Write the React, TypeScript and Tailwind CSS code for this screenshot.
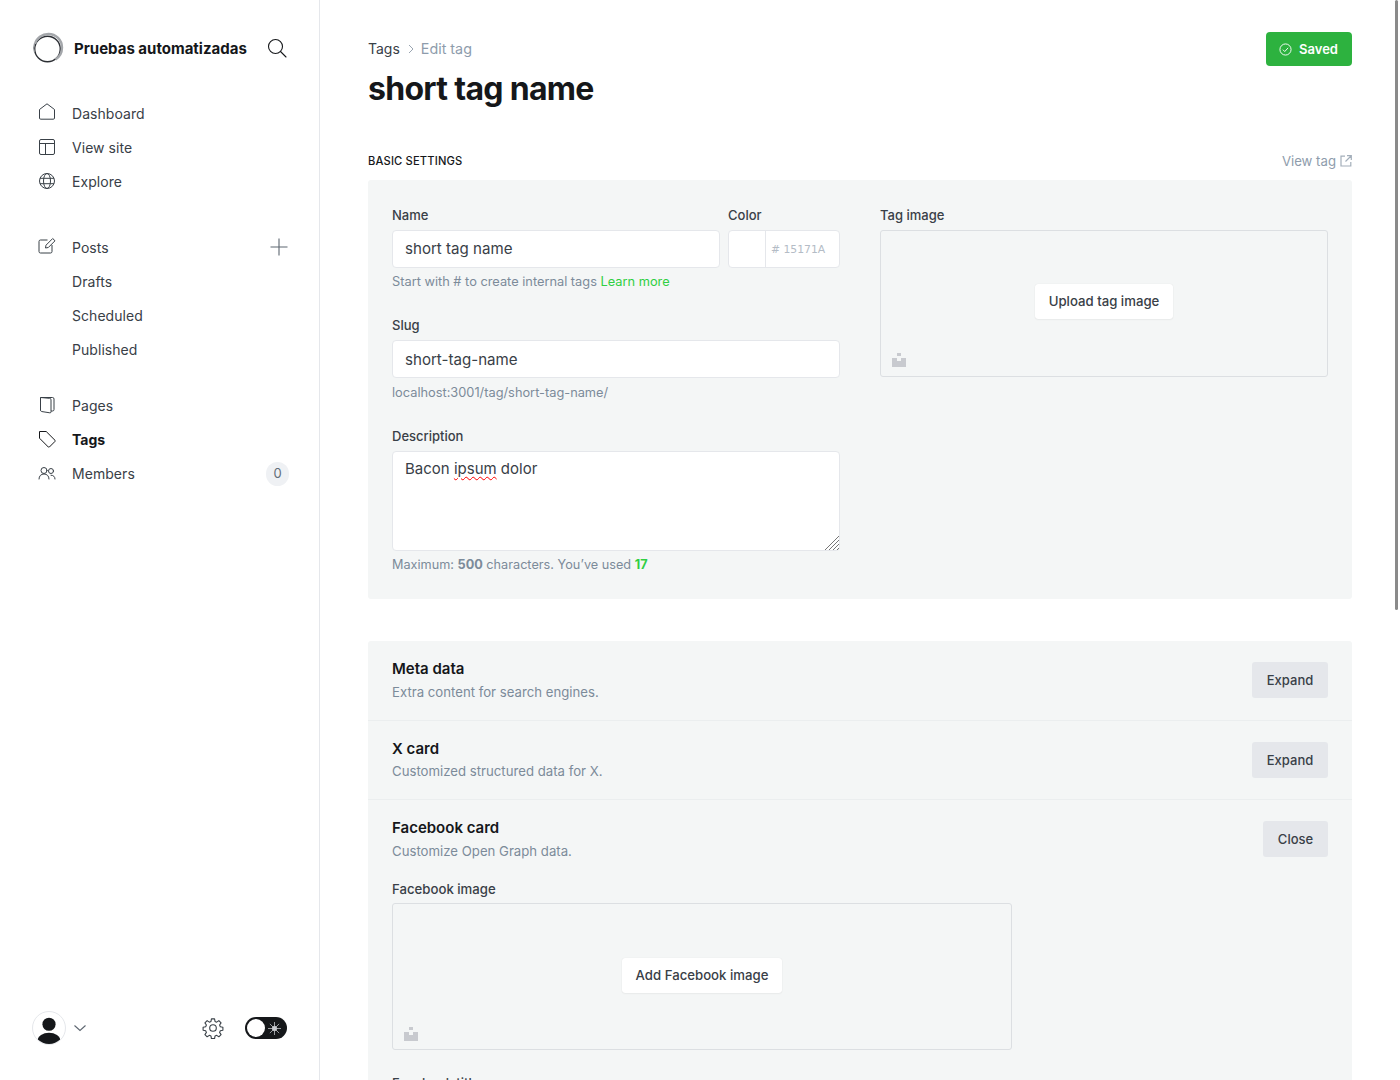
import React from "react";

const Home = () => (
  <svg width="18" height="18" viewBox="0 0 18 18" fill="none" stroke="#394047" strokeWidth="1" strokeLinejoin="round" className="-translate-y-[2px]">
    <path d="M1.500 6.500 9 .8l7.500 5.700v8.500a1.200 1.200 0 0 1-1.200 1.200H2.700a1.200 1.200 0 0 1-1.200-1.200z" />
  </svg>
);
const Layout = () => (
  <svg width="18" height="18" viewBox="0 0 18 18" fill="none" stroke="#394047" strokeWidth="1" className="-translate-y-[1px]">
    <rect x="1.500" y="1.500" width="15" height="15" rx="1.500" />
    <path d="M1.500 5.500h15M7.500 5.500v11" />
  </svg>
);
const Globe = () => (
  <svg width="18" height="18" viewBox="0 0 18 18" fill="none" stroke="#394047" strokeWidth="1" className="-translate-y-[1px]">
    <circle cx="9" cy="9" r="7.500" />
    <ellipse cx="9" cy="9" rx="3.500" ry="7.500" />
    <path d="M2 6.300h14M2 11.700h14" />
  </svg>
);
const Edit = () => (
  <svg width="18" height="18" viewBox="0 0 18 18" fill="none" stroke="#394047" strokeWidth="1" strokeLinejoin="round" className="-translate-y-[2px]">
    <path d="M9.500 3H2.500A1.500 1.500 0 0 0 1 4.500v10A1.500 1.500 0 0 0 2.500 16h10a1.500 1.500 0 0 0 1.500-1.500V8" />
    <path d="M7.500 11 8 8.200 14.700 1.500 17 3.800 10.300 10.500z" />
  </svg>
);
const Page = () => (
  <svg width="18" height="18" viewBox="0 0 18 18" fill="none" stroke="#394047" strokeWidth="1" strokeLinejoin="round" className="-translate-y-[1px]">
    <path d="M2.500 1.500h12A1.500 1.500 0 0 1 16 3v10.500a1.500 1.500 0 0 1-1.500 1.500H13" />
    <path d="M2.500 1.500 11.500 2.300A1.500 1.500 0 0 1 13 3.800v12a1 1 0 0 1-1.200 1L3.500 15.500A1.500 1.500 0 0 1 2.500 14z" />
  </svg>
);
const Tag = () => (
  <svg width="18" height="18" viewBox="0 0 18 18" fill="none" stroke="#15171a" strokeWidth="1" strokeLinejoin="round" className="-translate-y-[1px]">
    <path d="M1.500 1.500h6.700L17 10.300a.8.800 0 0 1 0 1.100L11.400 17a.8.800 0 0 1-1.100 0L1.500 8.200z" />
  </svg>
);
const Users = () => (
  <svg width="18" height="18" viewBox="0 0 18 18" fill="none" stroke="#394047" strokeWidth="1" strokeLinecap="round" className="-translate-y-[1px]">
    <circle cx="6" cy="6.500" r="3" />
    <path d="M1 15c0-3 2-5 5-5s5 2 5 5" />
    <circle cx="13" cy="7" r="2.500" />
    <path d="M13 11.200c2.500 0 4 1.500 4 3.800" />
  </svg>
);

function NavItem({ icon, label, active, right }: { icon?: React.ReactNode; label: string; active?: boolean; right?: React.ReactNode }) {
  return (
    <div className="flex h-[34px] items-center">
      <div className="flex w-[34px] shrink-0 items-center">{icon}</div>
      <span className={active ? "-translate-y-[1px] text-[14px] font-bold text-[#15171a]" : "-translate-y-[1px] text-[14px] tracking-[0.05px] text-[#394047]"}>{label}</span>
      {right && <div className="ml-auto flex items-center">{right}</div>}
    </div>
  );
}

function Sidebar() {
  return (
    <aside className="flex h-[1080px] w-[320px] shrink-0 flex-col border-r border-[#e5e7eb] pl-[38px] pr-[30px]">
      <div className="-ml-[6px] mt-[31px] flex h-[34px] items-center">
        <svg width="32" height="32" viewBox="0 0 32 32" fill="none" className="mr-[10px] shrink-0">
          <circle cx="15.500" cy="17" r="12.800" stroke="#2b2e33" strokeWidth="1.400" />
          <path d="M3 12C4.500 6 10 2 16.500 2 24 2 30 8 30 15.500c0 5-2.500 9.500-6.500 12" stroke="#a4a7ab" strokeWidth="2.400" />
          <path d="M2.500 20c-1-3-1-6 0-8.500" stroke="#8d9095" strokeWidth="1.200" />
        </svg>
        <span className="translate-y-[1px] text-[15px] font-bold text-[#15171a]">Pruebas automatizadas</span>
        <svg width="20" height="20" viewBox="0 0 20 20" fill="none" stroke="#15171a" strokeWidth="1.100" strokeLinecap="round" className="ml-auto mr-[2px]">
          <circle cx="8.500" cy="8.500" r="7" />
          <path d="m13.500 13.500 5.500 5.500" />
        </svg>
      </div>

      <nav className="mt-[32px]">
        <NavItem icon={<Home />} label="Dashboard" />
        <NavItem icon={<Layout />} label="View site" />
        <NavItem icon={<Globe />} label="Explore" />
      </nav>

      <nav className="mt-[32px]">
        <NavItem
          icon={<Edit />}
          label="Posts"
          right={
            <svg width="18" height="18" viewBox="0 0 18 18" fill="none" stroke="#5d6670" strokeWidth="1.100" className="mr-[1px] -translate-y-[1px]">
              <path d="M9 .5v17M.5 9h17" />
            </svg>
          }
        />
        <NavItem label="Drafts" />
        <NavItem label="Scheduled" />
        <NavItem label="Published" />
      </nav>

      <nav className="mt-[22px]">
        <NavItem icon={<Page />} label="Pages" />
        <NavItem icon={<Tag />} label="Tags" active />
        <NavItem
          icon={<Users />}
          label="Members"
          right={<span className="flex h-[24px] w-[23px] items-center justify-center rounded-full bg-[#eff1f4] text-[13px] text-[#626d79]">0</span>}
        />
      </nav>

      <div className="-ml-[6px] mb-[35px] mt-auto flex items-center">
        <div className="flex h-[34px] w-[34px] items-center justify-center overflow-hidden rounded-full border border-[#e5e7eb]">
          <svg width="34" height="34" viewBox="0 0 34 34" fill="#15171a">
            <circle cx="17" cy="13" r="7" />
            <ellipse cx="17" cy="30" rx="12" ry="8" />
          </svg>
        </div>
        <svg width="14" height="14" viewBox="0 0 14 14" fill="none" stroke="#5d6670" strokeWidth="1.100" className="ml-[7px]">
          <path d="m1.500 4.500 5.500 5 5.500-5" />
        </svg>
        <svg width="22" height="22" viewBox="0 0 24 24" fill="none" stroke="#394047" strokeWidth="1.200" strokeLinejoin="round" className="ml-auto mr-[21px]">
          <path d="M10.300 2h3.400l.5 2.800 1.800.8 2.400-1.600 2.400 2.400-1.600 2.400.8 1.800 2.800.5v3.400l-2.800.5-.8 1.800 1.600 2.400-2.400 2.400-2.400-1.600-1.800.8-.5 2.800h-3.400l-.5-2.800-1.800-.8-2.400 1.600-2.400-2.400 1.600-2.400-.8-1.800-2.800-.5v-3.400l2.800-.5.8-1.800-1.600-2.400 2.400-2.400 2.400 1.600 1.800-.8z" />
          <circle cx="12" cy="12" r="3.600" />
        </svg>
        <div className="mr-[2px] flex h-[22px] w-[42px] items-center justify-between rounded-full bg-[#15171a] pl-[2px] pr-[6px]">
          <span className="h-[18px] w-[18px] rounded-full bg-white" />
          <svg width="13" height="13" viewBox="0 0 14 14" fill="none" stroke="#c8cacf" strokeWidth="0.800">
            <circle cx="7" cy="7" r="2.500" fill="#c8cacf" />
            <path d="M7 0v14M0 7h14M2 2l10 10M12 2 2 12" />
          </svg>
        </div>
      </div>
    </aside>
  );
}

function Label({ children }: { children: React.ReactNode }) {
  return <div className="mb-[5px] h-[19px] text-[13px] font-medium leading-[19px] text-[#394047]">{children}</div>;
}

function Hint({ children, className }: { children: React.ReactNode; className: string }) {
  return <p className={`h-[19px] text-[12.800px] leading-[19px] text-[#7c8b9a] ${className}`}>{children}</p>;
}

function ImageBox({ className, label, buttonClass, iconClass }: { className: string; label: string; buttonClass: string; iconClass: string }) {
  return (
    <div className={`relative flex h-[147px] items-center justify-center rounded-[3px] border border-[#dcdfe2] ${className}`}>
      <button className={`flex h-[35px] items-center justify-center rounded-[3px] bg-white text-[13.200px] font-medium text-[#394047] shadow-[0_0_1px_rgba(0,0,0,0.12),0_1px_2px_rgba(0,0,0,0.04)] ${buttonClass}`}>
        {label}
      </button>
      <svg width="14" height="14" viewBox="0 0 14 14" fill="#c8cacf" className={`absolute left-[11px] ${iconClass}`}>
        <path d="M5 0h4v3H5zM0 5h5v3h4V5h5v9H0z" />
      </svg>
    </div>
  );
}

function Row({ title, sub, action, actionWidth, border, height, subClass }: { title: string; sub: string; action: string; actionWidth: string; border?: boolean; height: string; subClass: string }) {
  return (
    <div className={`flex items-start justify-between px-[24px] ${height} ${border ? "border-b border-[#ebeeef]" : ""}`}>
      <div className="pt-[17px]">
        <h4 className="text-[15px] font-semibold leading-[22px] text-[#15171a]">{title}</h4>
        <p className={`text-[13.200px] leading-[20px] text-[#7c8b9a] ${subClass}`}>{sub}</p>
      </div>
      <button className={`mt-[21px] flex h-[36px] items-center justify-center rounded-[3px] bg-[#e5e7eb] pt-[2px] text-[13px] font-medium text-[#394047] ${actionWidth}`}>
        {action}
      </button>
    </div>
  );
}

function Main() {
  const input = "h-[38px] w-full rounded-[4px] border border-[#e5e7eb] bg-white px-[12px] text-[15.100px] text-[#394047] outline-none";
  return (
    <main className="h-[1080px] min-w-0 flex-1 overflow-hidden px-[48px]">
      <div className="flex items-start justify-between pt-[32px]">
        <div>
          <div className="mt-[5px] flex h-[22px] items-center text-[14px]">
            <span className="text-[#394047]">Tags</span>
            <svg width="8" height="10" viewBox="0 0 8 10" fill="none" stroke="#9aa5b1" strokeWidth="1" className="ml-[7px] mr-[6px] mt-[2px]">
              <path d="m2 1 4 4-4 4" />
            </svg>
            <span className="translate-y-[1px] text-[14.300px] text-[#8e9cac]">Edit tag</span>
          </div>
          <h1 className="mt-[10px] text-[32px] font-bold leading-[40px] tracking-[-0.700px] text-[#15171a]">short tag name</h1>
        </div>
        <button className="flex h-[34px] w-[86px] items-center justify-center gap-[7px] rounded-[4px] bg-[#2db23f] pt-[1px] text-[13px] font-semibold text-white">
          <svg width="13" height="13" viewBox="0 0 14 14" fill="none" stroke="#ffffff" strokeWidth="1" className="-ml-[1px]">
            <circle cx="7" cy="7" r="6" />
            <path d="m4.200 7.200 2 2 3.600-4" />
          </svg>
          Saved
        </button>
      </div>

      <div className="mt-[40px] flex h-[26px] items-center justify-between">
        <h4 className="-translate-y-[1px] text-[11.200px] font-medium tracking-[0.150px] text-[#15171a]">BASIC SETTINGS</h4>
        <div className="flex items-center gap-[4px] text-[13.200px] text-[#8e9cac]">
          View tag
          <svg width="12" height="12" viewBox="0 0 12 12" fill="none" stroke="#a3aeba" strokeWidth="1.200" className="-translate-y-[1px]">
            <path d="M5 1.200H1v9.800h9.800V7M7 .7h4.300V5M11 1 5.500 6.500" />
          </svg>
        </div>
      </div>

      <section className="mt-[5px] flex h-[419px] gap-[40px] rounded-[3px] bg-[#f4f6f6] p-[24px] pt-[26px]">
        <div className="w-[448px]">
          <div className="flex gap-[8px]">
            <div className="w-[328px]">
              <Label>Name</Label>
              <input className={`${input} pb-[2px]`} defaultValue="short tag name" />
            </div>
            <div className="w-[112px]">
              <Label>Color</Label>
              <div className="flex h-[38px] items-center rounded-[4px] border border-[#e5e7eb] bg-white">
                <div className="h-full w-[37px] border-r border-[#e5e7eb]" />
                <span className="ml-[5px] pt-[2px] font-['DejaVu_Sans','Inter',sans-serif] text-[10.800px] text-[#b4bcc6]"># 15171A</span>
              </div>
            </div>
          </div>
          <Hint className="mt-[4px]">
            Start with # to create internal tags <span className="text-[#30cf43]">Learn more</span>
          </Hint>

          <div className="mt-[25px]">
            <Label>Slug</Label>
            <input className={input} defaultValue="short-tag-name" />
            <Hint className="mt-[5px]">localhost:3001/tag/short-tag-name/</Hint>
          </div>

          <div className="mt-[25px]">
            <Label>Description</Label>
            <div className="relative h-[100px] rounded-[4px] border border-[#e5e7eb] bg-white px-[12px] pt-[6px] text-[15px] leading-[22px] text-[#394047]">
              Bacon <span className="underline decoration-[#ff0000] decoration-wavy decoration-1 underline-offset-2">ipsum</span> dolor
              <svg width="15" height="15" viewBox="0 0 15 15" fill="none" stroke="#767676" strokeWidth="1" className="absolute bottom-0 right-0">
                <path d="M1 15 15 1M5 15 15 5M9 15l6-6M13 15l2-2" />
              </svg>
            </div>
            <p className="mt-[4px] h-[19px] text-[12.700px] leading-[19px] text-[#7c8b9a]">
              Maximum: <b className="font-bold">500</b> characters. You’ve used <b className="font-bold text-[#30cf43]">17</b>
            </p>
          </div>
        </div>

        <div className="w-[448px]">
          <Label>Tag image</Label>
          <ImageBox className="w-full pb-[4px]" label="Upload tag image" buttonClass="w-[138px]" iconClass="bottom-[9px]" />
        </div>
      </section>

      <section className="mt-[42px] rounded-[3px] bg-[#f4f6f6]">
        <Row title="Meta data" sub="Extra content for search engines." subClass="mt-[2px]" action="Expand" actionWidth="w-[76px]" border height="h-[80px]" />
        <Row title="X card" sub="Customized structured data for X." subClass="mt-[1px]" action="Expand" actionWidth="w-[76px]" border height="h-[79px]" />
        <Row title="Facebook card" sub="Customize Open Graph data." subClass="mt-[2px]" action="Close" actionWidth="w-[65px]" height="h-[80px]" />
        <div className="px-[24px] pb-[40px]">
          <div className="mb-[4px] h-[19px] text-[13.200px] font-medium leading-[19px] text-[#394047]">Facebook image</div>
          <ImageBox className="w-[620px] pb-[2px]" label="Add Facebook image" buttonClass="w-[160px]" iconClass="bottom-[8px]" />
          <div className="mt-[24px]">
            <Label>Facebook title</Label>
          </div>
        </div>
      </section>
    </main>
  );
}

export default function App() {
  return (
    <div className="relative flex h-[1080px] w-[1400px] overflow-hidden bg-white font-['Inter',sans-serif]">
      <Sidebar />
      <Main />
      <div className="absolute right-[2px] top-0 h-[610px] w-[3px] rounded-full bg-[#8a8a8a]" />
    </div>
  );
}
